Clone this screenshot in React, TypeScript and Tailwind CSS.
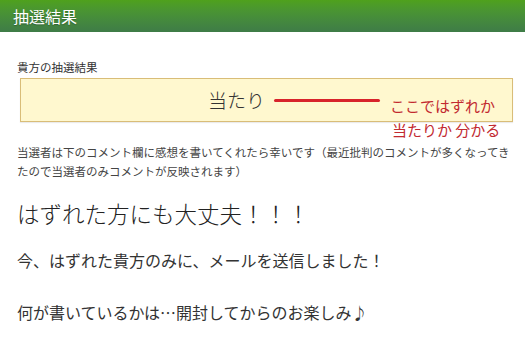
export default function App() {
    return (
        <div className="relative w-[530px] h-[344px] overflow-hidden bg-white text-[#333] font-['Noto_Sans_CJK_JP','Noto_Sans',sans-serif]">
            <div className="w-[525px] h-[32px] flex items-center pl-[13px] text-[16px] text-white bg-gradient-to-b from-[#4fa11c] to-[#3f7c47] [text-shadow:0_1px_1px_rgba(0,0,0,0.25)]">
                抽選結果
            </div>

            <div className="pl-[17px]">
                <p className="mt-[27px] text-[11.5px] leading-[16px] text-[#333]">貴方の抽選結果</p>

                <div className="mt-[3px] ml-[3px] w-[493px] h-[44px] flex items-center pl-[187px] bg-[#fff8cf] border border-[#d9bd78] shadow-[0_1px_1px_rgba(0,0,0,0.08)] text-[19px] font-light text-[#333]">
                    当たり
                </div>

                <p className="mt-[21px] text-[11.5px] leading-[19px] text-[#444] whitespace-nowrap">
                    当選者は下のコメント欄に感想を書いてくれたら幸いです（最近批判のコメントが多くなってき
                    <br />
                    たので当選者のみコメントが反映されます）
                </p>

                <h2 className="mt-[17px] text-[22.5px] leading-[30px] font-light text-[#222]">はずれた方にも大丈夫！！！</h2>

                <p className="mt-[20px] text-[16px] leading-[24px] text-[#333]">今、はずれた貴方のみに、メールを送信しました！</p>

                <p className="mt-[28px] text-[16px] leading-[24px] text-[#333]">何が書いているかは…開封してからのお楽しみ♪</p>
            </div>

            {/* red annotation drawn over the result box */}
            <div className="absolute left-[274px] top-[99px] w-[106px] h-[3px] rounded-full bg-[#d8232b]" />
            <div className="absolute left-[390px] top-[94px] text-[15px] leading-[24px] text-[#c22a30]">
                <div>ここではずれか</div>
                <div className="pl-[2px]">当たりか 分かる</div>
            </div>
        </div>
    );
}
